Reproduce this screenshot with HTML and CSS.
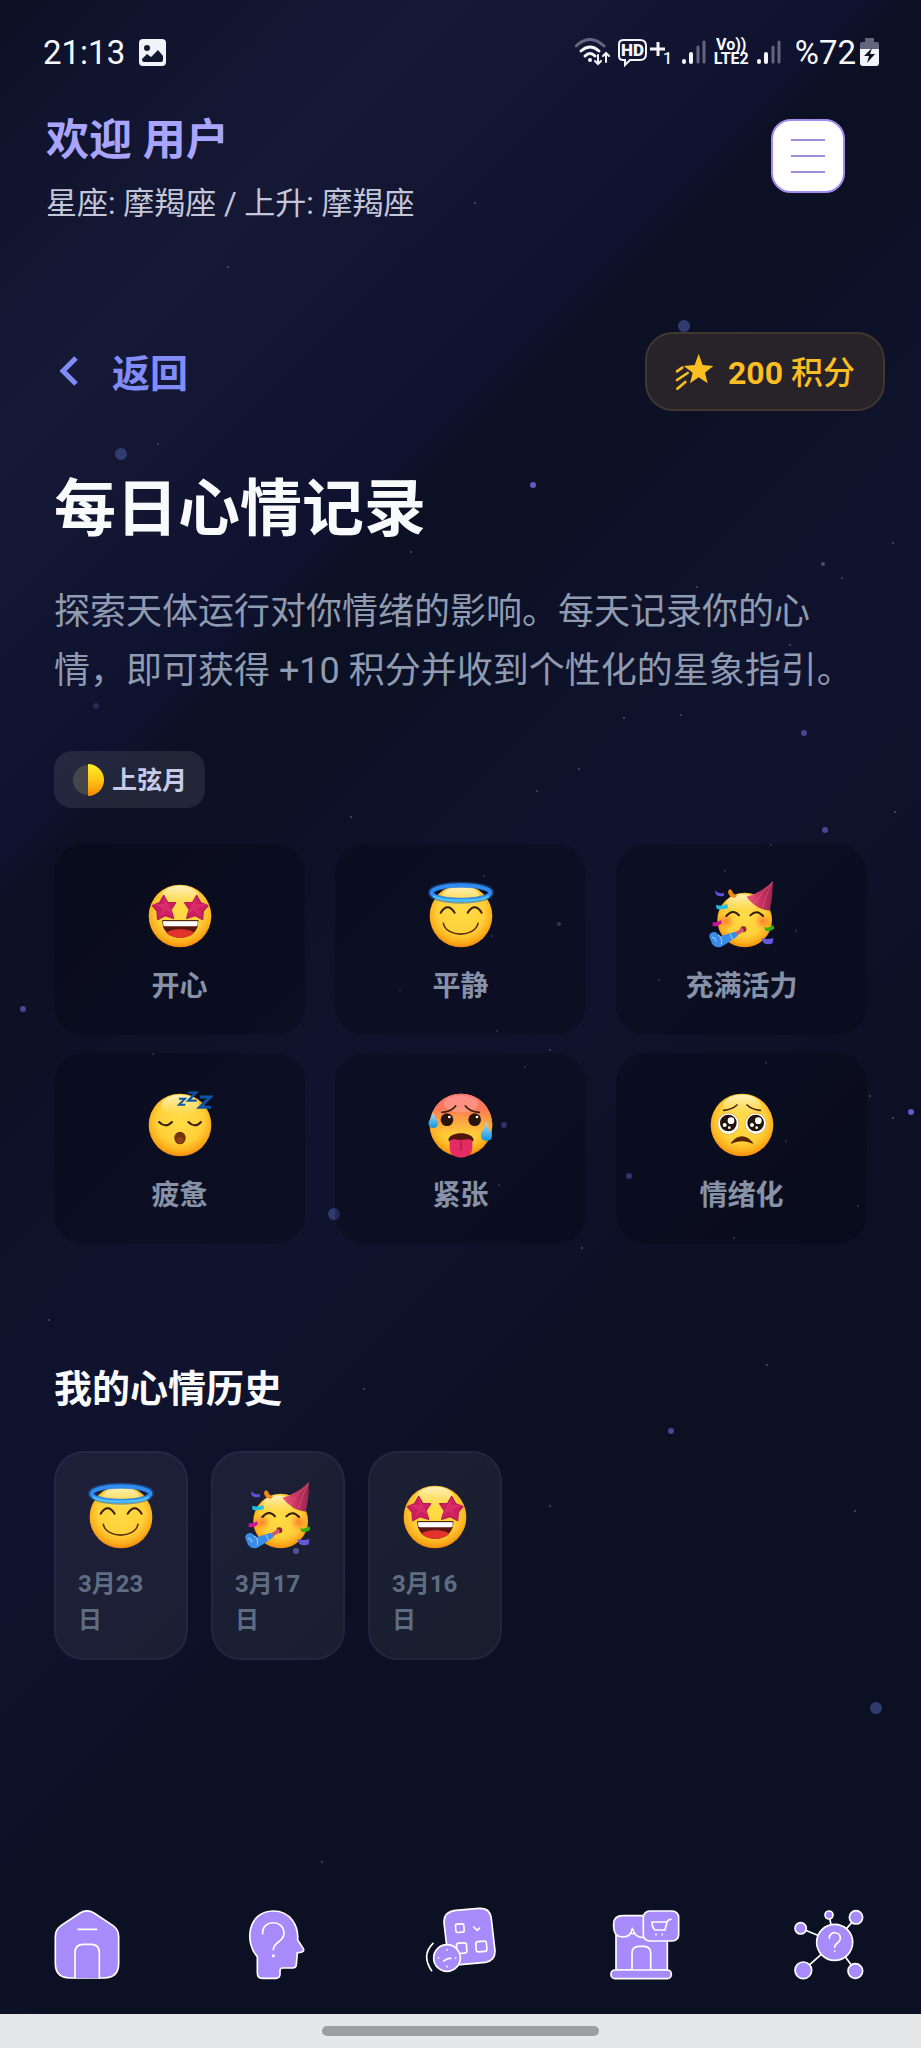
FILE: index.html
```
<!DOCTYPE html>
<html lang="zh-CN">
<head>
    <meta charset="UTF-8">
    <meta name="viewport" content="width=device-width, initial-scale=1.0">
    <title>每日心情记录</title>
    <link rel="stylesheet" href="styles.css">
</head>
<body>

    <!-- shared emoji faces -->
    <svg class="defs" width="0" height="0" aria-hidden="true">
        <defs>
            <radialGradient id="face" cx="50%" cy="42%" r="60%">
                <stop offset="0" stop-color="#ffdc45"/>
                <stop offset="0.62" stop-color="#ffd03a"/>
                <stop offset="0.84" stop-color="#fbae1c"/>
                <stop offset="1" stop-color="#ee8209"/>
            </radialGradient>
            <linearGradient id="shine" x1="0" y1="0" x2="0" y2="1">
                <stop offset="0" stop-color="#fff6c8" stop-opacity="0.95"/>
                <stop offset="1" stop-color="#ffe98a" stop-opacity="0"/>
            </linearGradient>
            <linearGradient id="heat" x1="0" y1="0" x2="0" y2="1">
                <stop offset="0" stop-color="#ff6f6f"/>
                <stop offset="0.25" stop-color="#fb7a58"/>
                <stop offset="0.55" stop-color="#fda63a" stop-opacity="0.6"/>
                <stop offset="0.75" stop-color="#ffc933" stop-opacity="0"/>
            </linearGradient>
            <linearGradient id="drop" x1="0" y1="0" x2="0" y2="1">
                <stop offset="0" stop-color="#a9e4fb"/>
                <stop offset="1" stop-color="#1191dd"/>
            </linearGradient>
            <linearGradient id="hat" x1="0" y1="0" x2="1" y2="0">
                <stop offset="0" stop-color="#ee5a7d"/>
                <stop offset="0.5" stop-color="#c93560"/>
                <stop offset="1" stop-color="#9b2350"/>
            </linearGradient>
            <linearGradient id="moon" x1="0" y1="0" x2="0" y2="1">
                <stop offset="0" stop-color="#fff02a"/>
                <stop offset="0.5" stop-color="#ffc414"/>
                <stop offset="1" stop-color="#f58a05"/>
            </linearGradient>
            <radialGradient id="blush">
                <stop offset="0" stop-color="#ff6a2a" stop-opacity="0.8"/>
                <stop offset="1" stop-color="#ff7a2a" stop-opacity="0"/>
            </radialGradient>
        </defs>

        <symbol id="base" viewBox="-108 -108 216 216">
            <circle r="94" fill="url(#face)"/>
            <ellipse cy="-58" rx="56" ry="33" fill="url(#shine)"/>
        </symbol>

        <symbol id="happy" viewBox="-108 -108 216 216">
            <use href="#base" x="-108" y="-108" width="216" height="216"/>
            <g fill="#d01f60" stroke="#b81c57" stroke-width="4" stroke-linejoin="round">
                <path d="M-49-62l12 21 24 1-14 21 8 26-26-8-22 12-2-26-14-16 22-9z"/>
                <path d="M50-62l-12 21-24 1 14 21-8 26 26-8 22 12 2-26 14-16-22-9z"/>
            </g>
            <path d="M-49-60l3 24-34 0 30 14-12 24 20-20 24 14-14-24zM50-60l-3 24 34 0-30 14 12 24-20-20-24 14 14-24z" fill="#e23a78" opacity="0.5"/>
            <path d="M-53 14H55C56 46 32 65 1 65S-54 46-53 14z" fill="#5c1510"/>
            <path d="M-42 50C-24 36 26 36 43 50 32 60 18 65 1 65s-32-5-43-15z" fill="#e2342d"/>
            <path d="M-51 15H53V27Q52 31 46 31H-44Q-50 31-50 27z" fill="#fff"/>
            <path d="M-53 14H55" stroke="#3c1409" stroke-width="3"/>
        </symbol>

        <symbol id="calm" viewBox="-108 -108 216 216">
            <use href="#base" x="-108" y="-108" width="216" height="216"/>
            <ellipse cy="-70" rx="90" ry="24" fill="none" stroke="#1c62b8" stroke-width="18" opacity="0.55"/>
            <ellipse cy="-70" rx="88" ry="22" fill="none" stroke="#2f8bf0" stroke-width="12"/>
            <path d="M-84-60C-60-42 60-42 84-60" fill="none" stroke="#4cc0fa" stroke-width="7"/>
            <path d="M-61-10q21-33 42 0M20-10q21-33 42 0" fill="none" stroke="#351c0c" stroke-width="6" stroke-linecap="round"/>
            <path d="M-53 22C-44 65 42 65 51 22" fill="none" stroke="#5c3008" stroke-width="5" stroke-linecap="round"/>
        </symbol>

        <symbol id="energetic" viewBox="-108 -108 216 216">
            <circle cx="8" cy="12" r="82" fill="url(#face)"/>
            <ellipse cx="0" cy="-38" rx="46" ry="27" fill="url(#shine)"/>
            <circle cx="-48" cy="16" r="26" fill="url(#blush)"/>
            <circle cx="62" cy="16" r="26" fill="url(#blush)"/>
            <path d="M13-58Q52-68 92-103Q94-60 83-16Q42-20 13-58z" fill="url(#hat)"/>
            <path d="M92-103Q70-60 62-24M92-103Q60-72 36-36" fill="none" stroke="#ef6c8d" stroke-width="3" opacity="0.5"/>
            <path d="M-47 0q20-23 38-2M25-2q20-20 38 2" fill="none" stroke="#351c0c" stroke-width="6" stroke-linecap="round"/>
            <circle cx="4" cy="40" r="9" fill="#8b2430"/>
            <path d="M4 40L-28 60" stroke="#cf5870" stroke-width="11"/>
            <path d="M-20 47L-64 60-80 48Q-100 48-98 64L-90 83Q-78 98-62 92L-42 80-13 60z" fill="#3b8be8"/>
            <path d="M-36 54l8 16M-72 57q14 8 10 28M-90 64q12 0 12 12" fill="none" stroke="#a8d4fc" stroke-width="3"/>
            <path d="M-80-78q10 14 26 8v9q-20 6-26-7z" fill="#5a52dc"/>
            <path d="M-40-78q6-6 10 2 4 12 16 14l-8 8q-18-2-20-18z" fill="#ee8a17"/>
            <path d="M-78-34q18 6 34-2l2 12q-20 6-34 2z" fill="#22c0e8"/>
            <path d="M-88 18q12 4 24-6l4 10q-14 12-28 8z" fill="#cc139e"/>
            <path d="M66 34q14 4 28-7l3 11q-14 10-26 6z" fill="#36ae14"/>
            <path d="M58 66q18 6 36 0l-2 16q-16 6-28-2z" fill="#6558d8"/>
        </symbol>

        <symbol id="tired" viewBox="-108 -108 216 216">
            <use href="#base" x="-108" y="-108" width="216" height="216"/>
            <path d="M-63-9q20 20 39 0M25-9q20 20 38 0" fill="none" stroke="#351c0c" stroke-width="6" stroke-linecap="round"/>
            <ellipse cy="39" rx="17" ry="19" fill="#71310b"/>
            <ellipse cy="46" rx="11" ry="10" fill="#8d4313"/>
            <g fill="none" stroke="#1055a5">
                <path d="M-3-79H15L-3-61H16" stroke-width="6"/>
                <path d="M25-97H48L25-73H50" stroke-width="7"/>
                <path d="M60-84H91L59-53H93" stroke-width="9"/>
            </g>
        </symbol>

        <symbol id="tense" viewBox="-108 -108 216 216">
            <circle r="94" fill="url(#face)"/>
            <circle r="94" fill="url(#heat)"/>
            <ellipse cy="-64" rx="52" ry="26" fill="#ffc3c3" opacity="0.35"/>
            <path d="M-57-38Q-30-40-16-57M13-57Q27-40 55-38" fill="none" stroke="#351c0c" stroke-width="5" stroke-linecap="round"/>
            <circle cx="-42" cy="-16" r="19" fill="#2a130b"/>
            <circle cx="41" cy="-16" r="19" fill="#2a130b"/>
            <circle cx="-35" cy="-24" r="4" fill="#fff"/>
            <circle cx="48" cy="-24" r="4" fill="#fff"/>
            <path d="M-38 44C-34 18 34 18 38 44Q36 52 30 50H-30Q-36 52-38 44z" fill="#4f160c"/>
            <path d="M-34 50Q-32 42-18 43 0 46 18 43 32 42 34 50V72Q30 98 0 98T-34 72z" fill="#e22c63"/>
            <path d="M0 46V76" stroke="#b01b4b" stroke-width="4"/>
            <path d="M-83-38Q-78-20-70-10-66 8-83 9-100 8-97-10-87-22-83-38z" fill="url(#drop)"/>
            <path d="M76-10Q80 10 92 24 98 46 77 48 56 46 60 24 72 10 76-10z" fill="url(#drop)"/>
        </symbol>

        <symbol id="emotional" viewBox="-108 -108 216 216">
            <use href="#base" x="-108" y="-108" width="216" height="216"/>
            <path d="M-55-44Q-30-46-15-60M15-60Q30-46 55-44" fill="none" stroke="#4a2508" stroke-width="5" stroke-linecap="round"/>
            <g id="puppy-eye">
                <circle cx="-41" cy="-4" r="32" fill="#fff" stroke="#d99a2b" stroke-width="2"/>
                <circle cx="-41" cy="-6" r="25" fill="#21120c"/>
                <circle cx="-33" cy="-13" r="10" fill="#fff"/>
                <circle cx="-52" cy="0" r="6" fill="#fff"/>
                <circle cx="-38" cy="8" r="4" fill="#fff"/>
            </g>
            <use href="#puppy-eye" x="82"/>
            <path d="M-31 54Q0 18 31 54 0 40-31 54z" fill="#5a2408" stroke="#5a2408" stroke-width="4" stroke-linejoin="round"/>
        </symbol>

        <symbol id="signal" viewBox="0 0 24 26">
            <g stroke-width="4" stroke-linecap="round">
                <path d="M2 22v1M9 15v8" stroke="#f4f4fa"/>
                <path d="M16 8v15M22 3v20" stroke="#62657c" stroke-width="3"/>
            </g>
        </symbol>
    </svg>

    <!-- starry sky -->
    <svg class="sky" viewBox="0 0 921 2048" preserveAspectRatio="xMidYMin slice" aria-hidden="true">
        <g fill="#303b70">
            <circle cx="684" cy="326" r="6"/><circle cx="121" cy="454" r="6"/>
            <circle cx="334" cy="1214" r="6"/><circle cx="876" cy="1708" r="6"/>
        </g>
        <g fill="#484793">
            <circle cx="533" cy="485" r="3" fill="#5f5bc0"/><circle cx="804" cy="733" r="3"/>
            <circle cx="825" cy="830" r="3"/><circle cx="504" cy="1125" r="3"/>
            <circle cx="629" cy="1176" r="3"/><circle cx="911" cy="1112" r="3" fill="#5f5bc0"/>
            <circle cx="23" cy="1009" r="3"/><circle cx="671" cy="1431" r="3"/>
            <circle cx="96" cy="706" r="3" fill="#272a52"/><circle cx="296" cy="1551" r="3"/>
        </g>
        <g fill="#4b4f6c">
            <circle cx="228" cy="267" r="1"/><circle cx="475" cy="203" r="1"/>
            <circle cx="158" cy="444" r="1"/><circle cx="811" cy="409" r="1"/>
            <circle cx="411" cy="552" r="1"/><circle cx="893" cy="543" r="1"/>
            <circle cx="823" cy="564" r="2"/><circle cx="842" cy="578" r="1"/>
            <circle cx="697" cy="587" r="1"/><circle cx="790" cy="645" r="1"/>
            <circle cx="624" cy="718" r="1"/><circle cx="681" cy="715" r="1"/>
            <circle cx="579" cy="769" r="1"/><circle cx="537" cy="791" r="1"/>
            <circle cx="351" cy="817" r="1"/><circle cx="771" cy="845" r="1"/>
            <circle cx="895" cy="812" r="1"/><circle cx="725" cy="871" r="1"/>
            <circle cx="484" cy="876" r="1"/><circle cx="492" cy="936" r="1"/>
            <circle cx="559" cy="924" r="2"/><circle cx="400" cy="990" r="1"/>
            <circle cx="659" cy="980" r="1"/><circle cx="796" cy="931" r="1"/>
            <circle cx="497" cy="1031" r="1"/><circle cx="550" cy="1050" r="1"/>
            <circle cx="525" cy="1067" r="1"/><circle cx="153" cy="1054" r="1"/>
            <circle cx="766" cy="1063" r="1"/><circle cx="870" cy="1096" r="1"/>
            <circle cx="893" cy="1118" r="1"/><circle cx="786" cy="1141" r="1"/>
            <circle cx="499" cy="1185" r="1"/><circle cx="858" cy="1206" r="1"/>
            <circle cx="734" cy="1238" r="1"/><circle cx="582" cy="1248" r="1"/>
            <circle cx="49" cy="1320" r="1"/><circle cx="364" cy="1389" r="1"/>
            <circle cx="767" cy="1365" r="1"/><circle cx="550" cy="1506" r="1"/>
            <circle cx="855" cy="1511" r="1"/><circle cx="322" cy="1862" r="1"/>
        </g>
    </svg>

    <div class="statusbar">
        <span class="time">21:13</span>
        <svg width="27" height="27" viewBox="0 0 27 27">
            <rect width="27" height="27" rx="4" fill="#f2f3f8"/>
            <circle cx="8" cy="9" r="3" fill="#12162f"/>
            <path d="M3 20L8 15l4 3 7-7 5 6v4q0 2-2 2H5q-2 0-2-3z" fill="#12162f"/>
        </svg>
        <div class="status-icons">
            <svg width="35" height="28" viewBox="0 0 35 28" fill="none" stroke-linecap="round">
                <path d="M1 8Q15-5 29 8" stroke="#62657c" stroke-width="3"/>
                <path d="M6 13q9-8 18 0M10 18q5-5 10 0" stroke="#f4f4fa" stroke-width="3"/>
                <circle cx="15" cy="22" r="2" fill="#f4f4fa"/>
                <path d="M23 17v9m-3-3l3 3 3-3M31 24v-9m-3 3l3-3 3 3" stroke="#f4f4fa" stroke-width="2"/>
            </svg>
            <svg width="56" height="30" viewBox="0 0 56 30">
                <path d="M6 3H22q6 0 6 6v8q0 6-6 6H12l-5 5v-5H5q-4 0-4-4V7q0-4 5-4z" fill="none" stroke="#f4f4fa" stroke-width="2"/>
                <text x="3" y="19" class="hd-text">HD</text>
                <path d="M32 12h15M40 5v14" stroke="#f4f4fa" stroke-width="3"/>
                <text x="45" y="27" class="hd-sub">1</text>
            </svg>
            <svg class="bars" width="24" height="26"><use href="#signal"/></svg>
            <span class="volte"><span>Vo))</span><span>LTE2</span></span>
            <svg class="bars" width="24" height="26"><use href="#signal"/></svg>
            <span class="percent">%72</span>
            <svg width="19" height="28" viewBox="0 0 19 28">
                <path d="M5 0h9v4h3q2 0 2 2v7H0V6q0-2 2-2h3z" fill="#62657c"/>
                <path d="M0 11h19v14q0 3-3 3H3q-3 0-3-3z" fill="#f2f3f8"/>
                <path d="M12 10L4 18h5l-2 7 8-9h-5z" fill="#0d1226"/>
            </svg>
        </div>
    </div>

    <header class="header">
        <div>
            <div class="welcome">欢迎 用户</div>
            <div class="signs">星座: 摩羯座 / 上升: 摩羯座</div>
        </div>
        <button class="menu-button" aria-label="菜单">
            <span></span>
            <span></span>
            <span></span>
        </button>
    </header>

    <main class="content">
        <div class="topline">
            <button class="back">
                <svg width="21" height="34" viewBox="0 0 21 34"><path d="M18 3L5 16l13 13" fill="none" stroke="#818cf8" stroke-width="5"/></svg>
                <span>返回</span>
            </button>
            <div class="points">
                <svg width="39" height="38" viewBox="111 95 117 114" fill="#fbbf24">
                    <path d="M182 98l12 33 32 3-25 20 8 32-27-18-26 18 8-32-27-20 33-3z"/>
                    <path d="M117 150l16-11M117 176l32-21M118 202l24-20" stroke="#fbbf24" stroke-width="8" stroke-linecap="round"/>
                </svg>
                <span><b>200</b> 积分</span>
            </div>
        </div>

        <h1>每日心情记录</h1>
        <p class="intro">探索天体运行对你情绪的影响。每天记录你的心情，即可获得 +10 积分并收到个性化的星象指引。</p>

        <div class="moon-phase">
            <svg width="32" height="32" viewBox="0 0 32 32">
                <circle cx="16" cy="16" r="15" fill="#45464b"/>
                <path d="M16 0a16 16 0 0 1 0 32z" fill="url(#moon)"/>
            </svg>
            <span>上弦月</span>
        </div>

        <div class="moods">
            <button class="mood"><svg class="emoji"><use href="#happy"/></svg>开心</button>
            <button class="mood"><svg class="emoji"><use href="#calm"/></svg>平静</button>
            <button class="mood"><svg class="emoji"><use href="#energetic"/></svg>充满活力</button>
            <button class="mood"><svg class="emoji"><use href="#tired"/></svg>疲惫</button>
            <button class="mood"><svg class="emoji"><use href="#tense"/></svg>紧张</button>
            <button class="mood"><svg class="emoji"><use href="#emotional"/></svg>情绪化</button>
        </div>

        <h2>我的心情历史</h2>
        <div class="history">
            <div class="day"><svg class="emoji"><use href="#calm"/></svg><span>3月23日</span></div>
            <div class="day"><svg class="emoji"><use href="#energetic"/></svg><span>3月17日</span></div>
            <div class="day"><svg class="emoji"><use href="#happy"/></svg><span>3月16日</span></div>
        </div>
    </main>

    <nav class="tabbar">
        <a href="#home" aria-label="首页">
            <svg viewBox="72 81 228 228">
                <path d="M150 99Q171 86 192 99L248 136Q266 148 266 170V250Q266 294 222 294H120Q76 294 76 250V170Q76 148 94 136z"/>
                <path d="M135 294V218Q135 193 160 193H183Q208 193 208 218V294M144 148H200"/>
            </svg>
        </a>
        <a href="#quiz" aria-label="问答">
            <svg viewBox="624 81 228 228">
                <path d="M682 230C644 190 650 94 730 93 782 93 806 138 803 180L820 206Q824 215 812 217L802 218 799 254Q798 264 788 264H758Q750 264 750 272V282Q750 295 737 295H698Q682 295 682 278z"/>
                <path d="M698 161C696 117 762 118 762 160 762 188 730 184 730 209" fill="none"/>
                <circle cx="730" cy="227" r="2"/>
            </svg>
        </a>
        <a href="#calendar" aria-label="日历">
            <svg viewBox="67 81 228 228">
                <path d="M168 91L238 85Q272 83 275 117L286 212Q287 243 257 247L182 254Q146 256 144 222L133 128Q132 95 168 91z"/>
                <rect x="168" y="132" width="25" height="25" rx="5" transform="rotate(-4 180 144)"/>
                <path d="M222 141l11 10 7-7" fill="none"/>
                <rect x="171" y="189" width="30" height="31" rx="7" transform="rotate(-4 186 204)"/>
                <rect x="229" y="184" width="32" height="31" rx="7" transform="rotate(-4 245 199)"/>
                <circle cx="142" cy="234" r="40"/>
                <path d="M132 243l12-7 9-1M142 209v1M142 259v1M116 234h1M167 234h1" fill="none"/>
                <path d="M100 190Q64 226 96 272" fill="none"/>
            </svg>
        </a>
        <a href="#shop" aria-label="商店">
            <svg viewBox="620 81 228 228">
                <path d="M647 160H801V270H647z"/>
                <path d="M668 107H740V172Q704 178 696 145 692 171 667 171 640 170 640 140V132Q640 107 668 107z"/>
                <path d="M695 270V220Q695 199 716 199H730Q751 199 751 220V270"/>
                <rect x="632" y="270" width="181" height="26" rx="12"/>
                <rect x="729" y="93" width="106" height="90" rx="19"/>
                <path d="M812 118q-11 0-13 12l-5 20H764q-9-8-9-24H798M767 163v1M786 163v1" fill="none"/>
            </svg>
        </a>
        <a href="#network" aria-label="星图">
            <svg viewBox="93 81 228 228">
                <path d="M207 105L224 187 288 113M122 145L224 187 130 271M224 187L287 273" fill="none"/>
                <circle cx="224" cy="187" r="54"/>
                <circle cx="207" cy="105" r="12"/>
                <circle cx="288" cy="112" r="20"/>
                <circle cx="122" cy="145" r="17"/>
                <circle cx="130" cy="271" r="25"/>
                <circle cx="286" cy="273" r="22"/>
                <path d="M208 175C207 152 241 153 241 175 241 190 224 188 224 202M224 213v1" fill="none"/>
            </svg>
        </a>
    </nav>
    <div class="gesture"><span></span></div>

</body>
</html>
```

FILE: styles.css
```
* {
    box-sizing: border-box;
}

body {
    position: relative;
    display: flex;
    flex-direction: column;
    min-height: 100vh;
    margin: 0;
    font-family: Roboto, "Noto Sans CJK SC", sans-serif;
    color: #f8fafc;
    background: linear-gradient(135deg, #0b1024 0%, #10142e 6%, #161936 15%, #0e122e 29%, #0b1023 31%, #10132e 50%, #0b1023 70%, #0b1023 100%);
}

button {
    font-family: inherit;
    border: none;
    background: none;
    padding: 0;
    cursor: pointer;
}

svg {
    display: block;
    flex-shrink: 0;
}

.defs {
    position: absolute;
}

.sky {
    position: absolute;
    top: 0;
    left: 0;
    width: 100%;
    height: 100%;
    z-index: -1;
}

/* status bar */
.statusbar {
    display: flex;
    align-items: center;
    gap: 14px;
    height: 104px;
    padding: 0 42px 0 43px;
    font-size: 33px;
}

.status-icons {
    display: flex;
    align-items: center;
    gap: 8px;
    margin-left: auto;
}

.volte {
    display: flex;
    flex-direction: column;
    align-items: center;
    font-size: 16px;
    font-weight: 700;
    line-height: 14px;
}

.percent {
    margin-left: 6px;
    margin-right: -4px;
}

.hd-text {
    font-size: 17px;
    font-weight: 900;
    fill: #f4f4fa;
}

.hd-sub {
    font-size: 16px;
    font-weight: 500;
    fill: #f4f4fa;
}

/* header */
.header {
    display: flex;
    justify-content: space-between;
    align-items: flex-start;
    padding: 11px 76px 0 46px;
}

.welcome {
    font-size: 43px;
    line-height: 50px;
    font-weight: 700;
    color: #a9a5fc;
}

.signs {
    margin-top: 21px;
    font-size: 31px;
    line-height: 36px;
    color: #c3c7d9;
}

.menu-button {
    display: flex;
    flex-direction: column;
    align-items: center;
    justify-content: center;
    gap: 14px;
    width: 74px;
    height: 74px;
    margin-top: 4px;
    background: #fff;
    border: 2px solid #a78bea;
    border-radius: 20px;
}

.menu-button span {
    width: 34px;
    height: 2px;
    background: #a08fd8;
}

/* content */
.content {
    padding: 110px 54px 0;
}

.topline {
    display: flex;
    justify-content: space-between;
    align-items: center;
    margin-right: -18px;
}

.topline span {
    padding-top: 4px;
}

.back {
    display: flex;
    align-items: center;
    gap: 33px;
    padding-left: 4px;
    font-size: 38px;
    line-height: 46px;
    font-weight: 700;
    color: #818cf8;
}

.points {
    display: flex;
    align-items: center;
    gap: 14px;
    padding: 16px 28px;
    font-size: 32px;
    line-height: 39px;
    font-weight: 500;
    color: #fbbf24;
    background: #282329;
    border: 2px solid #40372f;
    border-radius: 28px;
}

h1 {
    margin: 63px 0 37px;
    font-size: 62px;
    line-height: 72px;
    font-weight: 700;
}

.intro {
    margin: 0;
    font-size: 36px;
    line-height: 59px;
    color: #8f9bb0;
}

.moon-phase {
    display: flex;
    align-items: center;
    gap: 8px;
    width: fit-content;
    margin: 50px 0 36px;
    padding: 11px 18px;
    font-size: 25px;
    line-height: 33px;
    font-weight: 700;
    color: #c7cbe8;
    background: rgba(255, 255, 255, 0.09);
    border-radius: 18px;
}

.moon-phase span {
    padding-top: 2px;
}

.moods {
    display: grid;
    grid-template-columns: repeat(3, 1fr);
    gap: 18px 30px;
}

.mood {
    display: flex;
    flex-direction: column;
    align-items: center;
    gap: 18px;
    padding: 36px 8px 31px;
    font-size: 28px;
    line-height: 34px;
    font-weight: 700;
    color: #8792a8;
    background: rgba(5, 5, 15, 0.32);
    border-radius: 30px;
}

.emoji {
    width: 72px;
    height: 72px;
}

h2 {
    margin: 122px 0 39px;
    font-size: 38px;
    line-height: 46px;
    font-weight: 700;
}

.history {
    display: flex;
    gap: 23px;
}

.day {
    display: flex;
    flex-direction: column;
    align-items: center;
    gap: 13px;
    width: 134px;
    padding: 28px 22px 20px;
    font-size: 24px;
    line-height: 36px;
    font-weight: 700;
    color: #5f6d82;
    background: rgba(255, 255, 255, 0.06);
    border: 2px solid rgba(129, 140, 248, 0.08);
    border-radius: 30px;
}

/* bottom navigation */
.tabbar {
    display: grid;
    grid-template-columns: repeat(5, 1fr);
    justify-items: center;
    margin-top: auto;
    padding: 24px 0 31px;
}

.tabbar svg {
    width: 76px;
    height: 76px;
    fill: #a78bfa;
    stroke: #fff;
    stroke-width: 5;
    stroke-linecap: round;
    stroke-linejoin: round;
}

.gesture {
    display: flex;
    justify-content: center;
    padding: 12px 0;
    background: #e5e7e9;
}

.gesture span {
    width: 30%;
    height: 10px;
    background: #9c9ea0;
    border-radius: 5px;
}
```
